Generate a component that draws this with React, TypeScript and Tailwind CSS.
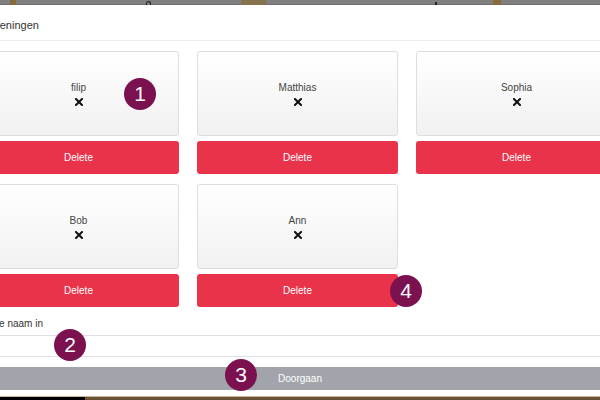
import React from "react";

const players = [
  ["filip", "Matthias", "Sophia"],
  ["Bob", "Ann"],
];

const badges = [
  { n: 1, cls: "left-[124px] top-[78px]" },
  { n: 2, cls: "left-[54px] top-[329px]" },
  { n: 3, cls: "left-[225px] top-[359px]" },
  { n: 4, cls: "left-[390px] top-[275px]" },
];

const Cross = () => (
  <svg width="8" height="8" viewBox="0 0 8 8" className="mt-[4px]">
    <path d="M1 1 L7 7 M7 1 L1 7" stroke="#111" strokeWidth="2" strokeLinecap="square" />
  </svg>
);

const PlayerCard = ({ name }: { name: string }) => (
  <div className="flex flex-col gap-[5px]">
    <div className="h-[85px] rounded-[3px] border border-[#dcdee2] bg-gradient-to-b from-white to-[#f1f1f1] flex flex-col items-center justify-center">
      <span className="text-[10px] leading-[12px] text-[#444]">{name}</span>
      <Cross />
    </div>
    <button className="h-[33px] rounded-[3px] bg-[#e8334a] text-white text-[10px]">Delete</button>
  </div>
);

export default function App() {
  return (
    <div
      className="relative w-[600px] h-[400px] overflow-hidden bg-[#808080] flex flex-col"
      style={{ fontFamily: '"Liberation Sans", Arial, sans-serif' }}
    >
      {/* page behind the overlay */}
      <div className="h-[5px] flex items-start border-b border-[#6f6f6f]">
        <span className="ml-[10px] w-[6px] h-[5px] bg-[#8a6a3a]" />
        <span className="ml-[130px] mt-[1px] w-[5px] h-[4px] rounded-t-full border border-b-0 border-[#222]" />
        <span className="ml-[90px] w-[25px] h-[5px] bg-[#86724f]" />
        <span className="ml-[169px] mt-[2px] w-[2px] h-[3px] bg-[#222]" />
        <span className="ml-[56px] w-[8px] h-[5px] bg-[#8a6a3a]" />
      </div>

      <div className="bg-white flex flex-col h-[391px]">
        <div className="h-[36px] border-b border-[#ececec] flex items-center">
          <h2 className="ml-[-18px] text-[11px] text-[#333] pt-[5px]">Oefeningen</h2>
        </div>

        <div className="ml-[-22px] mt-[10px] flex flex-col gap-[10px]">
          {players.map((row, i) => (
            <div key={i} className="grid grid-cols-[201px_201px_201px] gap-x-[18px]">
              {row.map((p) => (
                <PlayerCard key={p} name={p} />
              ))}
            </div>
          ))}
        </div>

        <label className="ml-[-71px] mt-[11px] text-[10px] text-[#333] leading-[12px]">
          Geef een nieuwe naam in
        </label>
        <div className="mt-[5px] h-[22px] border-y border-[#e0e1e8] bg-white" />
        <button className="mt-[10px] h-[23px] bg-[#a1a5ab] text-white text-[10px]">Doorgaan</button>
      </div>

      <div className="flex-1 flex border-t border-[#c9b89a]">
        <span className="w-[85px] bg-black" />
        <span className="flex-1 bg-[#6b5236]" />
      </div>

      {badges.map((b) => (
        <div
          key={b.n}
          className={`absolute ${b.cls} w-[32px] h-[32px] rounded-full bg-[#7c1150] text-white text-[21px] flex items-center justify-center`}
        >
          {b.n}
        </div>
      ))}
    </div>
  );
}
